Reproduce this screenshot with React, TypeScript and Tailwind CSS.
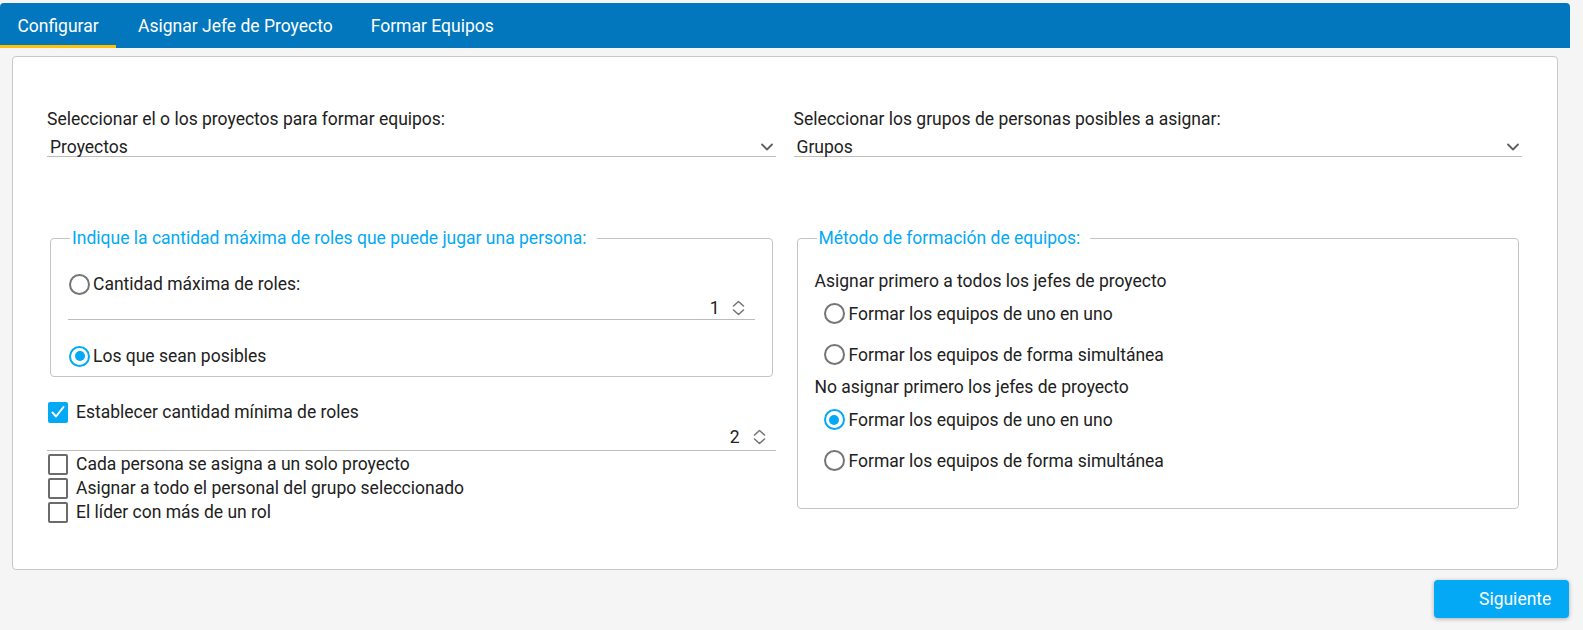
import React from "react";

function Radio({ checked }: { checked?: boolean }) {
  return (
    <span
      className={
        checked
          ? "flex h-[21px] w-[21px] shrink-0 items-center justify-center rounded-full border-2 border-[#03a9f4]"
          : "flex h-[21px] w-[21px] shrink-0 items-center justify-center rounded-full border-2 border-[#757575]"
      }
    >
      {checked && <span className="h-[10px] w-[10px] rounded-full bg-[#03a9f4]" />}
    </span>
  );
}

function Checkbox({ checked }: { checked?: boolean }) {
  if (checked) {
    return (
      <span className="flex h-[21px] w-[20px] shrink-0 items-center justify-center rounded-[2px] bg-[#03a9f4]">
        <svg width="16" height="16" viewBox="0 0 16 16" fill="none">
          <polyline points="2.5,8.5 6,12.5 13.5,3" stroke="white" strokeWidth="2" strokeLinecap="round" strokeLinejoin="round" />
        </svg>
      </span>
    );
  }
  return <span className="h-[21px] w-[20px] shrink-0 rounded-[2px] border-2 border-[#6b6b6b]" />;
}

function ChevronDown() {
  return (
    <svg width="12" height="8" viewBox="0 0 12 8" fill="none">
      <polyline points="1,1.5 6,6.5 11,1.5" stroke="#5f5f5f" strokeWidth="1.8" strokeLinecap="round" strokeLinejoin="round" />
    </svg>
  );
}

function Spinner() {
  return (
    <svg width="13" height="16" viewBox="0 0 13 16" fill="none">
      <polyline points="1.5,6 6.5,1.5 11.5,6" stroke="#777" strokeWidth="1.6" strokeLinecap="round" strokeLinejoin="round" />
      <polyline points="1.5,10 6.5,14.5 11.5,10" stroke="#777" strokeWidth="1.6" strokeLinecap="round" strokeLinejoin="round" />
    </svg>
  );
}

function Select({ label, value }: { label: string; value: string }) {
  return (
    <div className="flex flex-col">
      <div className="h-[24px]">{label}</div>
      <div className="flex h-[26px] items-center justify-between border-b border-[#bdbdbd] pl-[3px] pr-[3px] pt-[6px]">
        <span>{value}</span>
        <ChevronDown />
      </div>
    </div>
  );
}

function NumberInput({ value, extraClass }: { value: string; extraClass: string }) {
  return (
    <div className={extraClass}>
      <span>{value}</span>
      <Spinner />
    </div>
  );
}

export default function App() {
  return (
    <div className="min-h-[630px] bg-[#f5f5f5] pt-[3px] font-[Roboto,sans-serif] text-[17.5px] leading-[24px] text-[#212121]">
      <div className="flex w-[1570px] flex-col">
        <nav className="flex h-[45px] rounded-t-[4px] bg-[#0277bd] text-white">
          <div className="flex w-[116px] items-center justify-center border-b-[3px] border-[#ffc107] pt-[3px]">
            Configurar
          </div>
          <div className="flex items-center pl-[22px] pr-[18px]">Asignar Jefe de Proyecto</div>
          <div className="flex items-center px-[20px]">Formar Equipos</div>
        </nav>

        <div className="mx-[12px] mt-[8px] rounded-[4px] border border-[#c8c8c8] bg-white pb-[45px] pl-[34px] pr-[35px] pt-[50px]">
          <div className="grid grid-cols-2 items-start gap-x-[18px]">
            {/* Left column */}
            <div className="flex flex-col">
              <Select label="Seleccionar el o los proyectos para formar equipos:" value="Proyectos" />

              <fieldset className="mx-[3px] mt-[69px] rounded-[4px] border border-[#c4c4c4] px-[17px] pb-[8px] pt-[22px]">
                <legend className="ml-[2px] pl-[2px] pr-[10px] text-[#03a9f4]">
                  Indique la cantidad máxima de roles que puede jugar una persona:
                </legend>
                <div className="flex h-[24px] items-center gap-[3px] pl-[1px]">
                  <Radio />
                  <span>Cantidad máxima de roles:</span>
                </div>
                <NumberInput
                  value="1"
                  extraClass="flex h-[24px] items-center justify-end gap-[12px] border-b border-[#bdbdbd] pr-[10px]"
                />
                <div className="mt-[24px] flex h-[24px] items-center gap-[3px] pl-[1px]">
                  <Radio checked />
                  <span>Los que sean posibles</span>
                </div>
              </fieldset>

              <div className="mt-[23px] flex h-[24px] items-center gap-[8px] pl-[1px]">
                <Checkbox checked />
                <span>Establecer cantidad mínima de roles</span>
              </div>
              <NumberInput
                value="2"
                extraClass="flex h-[27px] items-center justify-end gap-[13px] border-b border-[#bdbdbd] pr-[10px]"
              />
              <div className="mt-[1px] flex flex-col">
                <div className="flex h-[24px] items-center gap-[8px] pl-[1px]">
                  <Checkbox />
                  <span>Cada persona se asigna a un solo proyecto</span>
                </div>
                <div className="flex h-[24px] items-center gap-[8px] pl-[1px]">
                  <Checkbox />
                  <span>Asignar a todo el personal del grupo seleccionado</span>
                </div>
                <div className="flex h-[24px] items-center gap-[8px] pl-[1px]">
                  <Checkbox />
                  <span>El líder con más de un rol</span>
                </div>
              </div>
            </div>

            {/* Right column */}
            <div className="flex flex-col">
              <Select label="Seleccionar los grupos de personas posibles a asignar:" value="Grupos" />

              <fieldset className="mx-[3px] mt-[69px] rounded-[4px] border border-[#c4c4c4] px-[17px] pb-[27px] pt-[19px]">
                <legend className="ml-[2px] pl-[2px] pr-[10px] text-[#03a9f4]">Método de formación de equipos:</legend>
                <div className="h-[24px]">Asignar primero a todos los jefes de proyecto</div>
                <div className="flex h-[41px] items-center gap-[4px] pl-[9px]">
                  <Radio />
                  <span>Formar los equipos de uno en uno</span>
                </div>
                <div className="flex h-[41px] items-center gap-[4px] pl-[9px]">
                  <Radio />
                  <span>Formar los equipos de forma simultánea</span>
                </div>
                <div className="h-[24px]">No asignar primero los jefes de proyecto</div>
                <div className="flex h-[41px] items-center gap-[4px] pl-[9px]">
                  <Radio checked />
                  <span>Formar los equipos de uno en uno</span>
                </div>
                <div className="flex h-[41px] items-center gap-[4px] pl-[9px]">
                  <Radio />
                  <span>Formar los equipos de forma simultánea</span>
                </div>
              </fieldset>
            </div>
          </div>
        </div>

        <div className="mr-[1px] mt-[10px] flex justify-end">
          <button className="flex h-[38px] w-[135px] items-center rounded-[4px] bg-[#03a9f4] pl-[45px] text-white shadow-[0_1px_4px_rgba(0,0,0,0.3)]">
            Siguiente
          </button>
        </div>
      </div>
    </div>
  );
}
